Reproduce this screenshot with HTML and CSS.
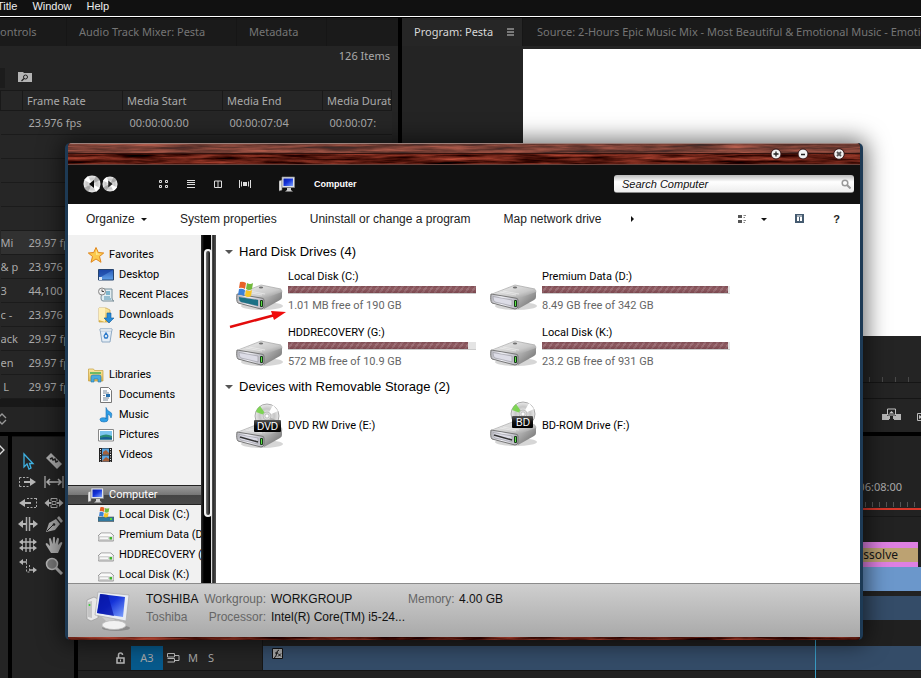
FILE: index.html
```html
<!DOCTYPE html>
<html lang="en">
<head>
<meta charset="utf-8">
<title>Computer</title>
<link rel="stylesheet" href="styles.css">
</head>
<body>
<svg class="defs" aria-hidden="true">
  <defs>
    <linearGradient id="steel" x1="0" y1="0" x2="1" y2="1"><stop offset="0" stop-color="#f4f4f4"/><stop offset=".6" stop-color="#c9c9c9"/><stop offset="1" stop-color="#7d7d7d"/></linearGradient>
    <linearGradient id="front" x1="0" y1="0" x2="1" y2="0"><stop offset="0" stop-color="#b5b5bb"/><stop offset=".4" stop-color="#f5f5fb"/><stop offset="1" stop-color="#aeaeb6"/></linearGradient>
    <linearGradient id="side" x1="0" y1="0" x2="1" y2="1"><stop offset="0" stop-color="#c8c8c8"/><stop offset="1" stop-color="#636363"/></linearGradient>
    <linearGradient id="blue" x1="0" y1="0" x2="1" y2="1"><stop offset="0" stop-color="#0a1fa8"/><stop offset=".45" stop-color="#1432d8"/><stop offset="1" stop-color="#7fa4ff"/></linearGradient>
    <linearGradient id="sky" x1="0" y1="0" x2="0" y2="1"><stop offset="0" stop-color="#2a5bb8"/><stop offset="1" stop-color="#5fa0e8"/></linearGradient>
    <linearGradient id="gold" x1="0" y1="0" x2="0" y2="1"><stop offset="0" stop-color="#fbe9a4"/><stop offset="1" stop-color="#e2b94f"/></linearGradient>
    <linearGradient id="label" x1="0" y1="0" x2="0" y2="1"><stop offset="0" stop-color="#555"/><stop offset=".5" stop-color="#111"/><stop offset="1" stop-color="#000"/></linearGradient>
    <radialGradient id="disc"><stop offset="0" stop-color="#fff"/><stop offset=".6" stop-color="#c6c6c6"/><stop offset="1" stop-color="#eaeaea"/></radialGradient>
    <filter id="grain" x="0" y="0" width="100%" height="100%" color-interpolation-filters="sRGB">
      <feTurbulence type="fractalNoise" baseFrequency="0.02 0.28" numOctaves="4" seed="8"/>
      <feColorMatrix values="1 0 0 0 -.13  .5 0 0 0 -.14  .4 0 0 0 -.13  0 0 0 0 1"/>
    </filter>
    <symbol id="i-drive" viewBox="0 0 48 28">
      <ellipse cx="26" cy="23" rx="21" ry="4" fill="#000" opacity=".16"/>
      <path d="M1 12 25 2 45 6 Q47 7 46 10L27 17 2 14z" fill="url(#steel)"/>
      <path d="M27 16 46 9V14Q46 16 44 17L28 26z" fill="url(#side)"/>
      <path d="M1 11Q0 18 2 20L25 26Q28 26 28 23V17Q28 15 25 15z" fill="url(#front)" stroke="#777"/>
      <path d="M3 13.5Q3 18 5 19L22 23V17z" fill="#dcdce6" stroke="#94949c" stroke-width=".6"/>
      <path d="M2 11 25 2 45 6" fill="none" stroke="#a5a5a5" stroke-width=".7"/>
      <path d="M10 9 26 12M13 8l16 3" stroke="#eee" stroke-width=".7"/>
      <rect x="24" y="17" width="3" height="7" rx="1" fill="#163d16"/><rect x="25" y="18" width="1" height="5" fill="#59e043"/>
      <ellipse cx="25" cy="4.500" rx="2.200" ry="1" fill="#707070"/>
    </symbol>
    <symbol id="i-flag" viewBox="0 0 16 16">
      <path d="M2 1Q5 0 8 2L7 8Q4 6 1 7z" fill="#e96227"/><path d="M9 2Q12 4 15 2L14 8Q11 10 8 8z" fill="#72b93d"/>
      <path d="M1 8Q4 7 7 9L6 15Q3 13 0 14z" fill="#3a81d8"/><path d="M8 9Q11 11 14 9L13 15Q10 17 7 15z" fill="#f7c527"/>
    </symbol>
    <symbol id="i-disc" viewBox="0 0 26 26">
      <circle cx="13" cy="13" r="12" fill="url(#disc)" stroke="#999" stroke-width=".8"/>
      <path d="M13 13 2 9A12 12 0 0 1 6 3z" fill="#6ed43e" opacity=".85"/><path d="M13 13 19 2 24 8z" fill="#fff"/><path d="M13 13 20 23 24 18z" fill="#9a9a9a" opacity=".6"/>
      <circle cx="13" cy="13" r="4" fill="#ddd" stroke="#aaa" stroke-width=".6"/><circle cx="13" cy="13" r="2" fill="#fff" stroke="#999" stroke-width=".5"/>
    </symbol>
    <symbol id="i-pc" viewBox="0 0 16 16">
      <path d="M0 5 3 4V14L0 15z" fill="#e9e9e9" stroke="#777" stroke-width=".6"/>
      <path d="M3 1H15.500V11.500H3z" fill="#dfe3ea" stroke="#858585" stroke-width=".7"/><path d="M4.500 2.500H14V10H4.500z" fill="url(#blue)"/>
      <path d="M8 12h4v2l2 1.500H6L8 14z" fill="#cfcfcf"/>
    </symbol>
    <symbol id="i-sdrive" viewBox="0 0 16 16"><path d="M3 6H13L16 9V13Q16 14 15 14H1Q0 14 0 13V9z" fill="#dedede" stroke="#858585" stroke-width=".8"/><path d="M3 6.500H13L15 9H1z" fill="#fafafa"/><rect x="1.500" y="10" width="9" height="2.500" fill="#f8f8f8" stroke="#aaa" stroke-width=".4"/><rect x="11.500" y="10" width="2.500" height="2.500" fill="#41b52e"/></symbol>
  </defs>
</svg>

<div class="editor">
  <nav class="menubar"><button>Title</button><button>Window</button><button>Help</button></nav>

  <div class="upper">
    <section class="project panel">
      <div class="tabs"><button class="tab tab-a">ontrols</button><button class="tab tab-b">Audio Track Mixer: Pesta</button><button class="tab tab-c">Metadata</button></div>
      <p class="count">126 Items</p>
      <div class="finder"><span class="stub"></span>
        <svg class="folder" viewBox="0 0 14 12"><path d="M0 1h5l1 1h8v9H0z" fill="#b4b4b4"/><circle cx="7.500" cy="6" r="2" fill="none" stroke="#222"/><path d="M6 7.500 3.500 10" stroke="#222" stroke-width="1.300"/></svg>
      </div>
      <table class="bin">
        <thead><tr><th></th><th>Frame Rate</th><th>Media Start</th><th>Media End</th><th>Media Durati</th></tr></thead>
        <tbody>
          <tr><td></td><td>23.976 fps</td><td>00:00:00:00</td><td>00:00:07:04</td><td>00:00:07:</td></tr>
          <tr><td></td><td></td><td></td><td></td><td></td></tr>
          <tr><td></td><td></td><td></td><td></td><td></td></tr>
          <tr><td></td><td></td><td></td><td></td><td></td></tr>
          <tr><td></td><td></td><td></td><td></td><td></td></tr>
          <tr class="picked"><td>Mi</td><td>29.97 fps</td><td></td><td></td><td></td></tr>
          <tr><td>&amp; p</td><td>23.976 fps</td><td></td><td></td><td></td></tr>
          <tr><td>3</td><td>44,100 Hz</td><td></td><td></td><td></td></tr>
          <tr><td>c -</td><td>23.976 fps</td><td></td><td></td><td></td></tr>
          <tr><td>ack</td><td>29.97 fps</td><td></td><td></td><td></td></tr>
          <tr><td>en</td><td>29.97 fps</td><td></td><td></td><td></td></tr>
          <tr><td>&nbsp;L</td><td>29.97 fps</td><td></td><td></td><td></td></tr>
        </tbody>
      </table>
      <div class="binfoot"><svg viewBox="0 0 8 12"><path d="M-2 5 2 1 6 5M-2 7 2 11 6 7" fill="none" stroke="#999" stroke-width="1.300"/></svg></div>
    </section>

    <section class="program panel">
      <div class="tabs"><button class="tab tab-on">Program: Pesta <svg viewBox="0 0 8 8"><path d="M0 1h7M0 4h7M0 7h7" stroke="#ccc"/></svg></button><button class="tab tab-src">Source: 2-Hours Epic Music Mix - Most Beautiful &amp; Emotional Music - Emotional</button></div>
      <div class="picture"></div>
      <div class="scrub"></div>
      <div class="transport">
        <svg class="lift" viewBox="0 0 20 13"><path d="M0 6h5v2h3v3h-1v1H0zM19 6h-5v2h-3v3h1v1h7z" fill="#b5b5b5"/><path d="M5.500 1h8v6h-8z" fill="#222" stroke="#c2c2c2"/><path d="M7 5.500h5L9.500 3z" fill="#ccc"/></svg>
        <svg class="export" viewBox="0 0 4 8"><path d="M5 .5H.5v7H5" fill="none" stroke="#bbb"/><path d="M2 2l4 2-4 2z" fill="#bbb"/></svg>
      </div>
    </section>
  </div>

  <div class="lower">
    <section class="edge panel"><svg viewBox="0 0 6 10"><path d="M-1 0 4 5-1 10" fill="none" stroke="#ddd" stroke-width="1.300"/></svg></section>
    <section class="tools panel">
      <button aria-label="Selection"><svg viewBox="0 0 20 18"><path d="M6 2V15L9 12 11 17 13 16 11.500 11.500H15z" fill="none" stroke="#3fb0e0" stroke-width="1.300"/></svg></button>
      <button aria-label="Razor"><svg viewBox="0 0 20 18"><path d="M2 6 7 1 18 12 13 17z" fill="#aaa"/><path d="M6 7l2-1 1 2 2-1 1 3 2-1" fill="none" stroke="#222" stroke-width="1.500"/></svg></button>
      <button aria-label="Track forward"><svg viewBox="0 0 20 18"><path d="M1.500 4.500H11M1.500 13.500H11M1.500 4.500v9" fill="none" stroke="#aaa" stroke-dasharray="2 1.500"/><path d="M6 8h6V5l6 4-6 4v-3H6z" fill="#b5b5b5"/></svg></button>
      <button aria-label="Rate stretch"><svg viewBox="0 0 20 18"><path d="M1 3v12M19 3v12" stroke="#aaa" stroke-width="1.300"/><path d="M3 9h14M6 6 3 9l3 3M14 6l3 3-3 3" fill="none" stroke="#b5b5b5" stroke-width="1.500"/></svg></button>
      <button aria-label="Track backward"><svg viewBox="0 0 20 18"><path d="M9 4.500h9M9 13.500h9M18.500 4v10" fill="none" stroke="#aaa" stroke-dasharray="2 1.500"/><path d="M13 8H7V5L1 9l6 4v-3h6z" fill="#b5b5b5"/></svg></button>
      <button aria-label="Slip"><svg viewBox="0 0 20 18"><path d="M7 7V4.500h6V7M7 11v2.500h6V11M8 7.500h4v3H8z" fill="none" stroke="#aaa"/><path d="M.5 9 5 5v3h2v2H5v3zM19.500 9 15 5v3h-2v2h2v3z" fill="#b5b5b5"/></svg></button>
      <button aria-label="Ripple"><svg viewBox="0 0 20 18"><path d="M8.500 2v14M11.500 2v14" stroke="#aaa" stroke-width="1.500"/><path d="M0 9 5 5v3h3v2H5v3zM20 9l-5-4v3h-3v2h3v3z" fill="#b5b5b5"/></svg></button>
      <button aria-label="Pen"><svg viewBox="0 0 20 18"><path d="M2 17 5 8 12 4 16 9 11 15z" fill="#aaa"/><path d="M13 3 15 1 19 6 17 8z" fill="#aaa"/><path d="M3 16l6-6" stroke="#222"/><circle cx="10" cy="9.500" r="1.300" fill="#222"/></svg></button>
      <button aria-label="Rolling"><svg viewBox="0 0 20 18"><path d="M8 2v14M12 2v14M4 6h12M4 12h12" stroke="#b5b5b5" stroke-width="1.300"/><path d="M5 3 1 6l4 3zM15 3l4 3-4 3zM5 9l-4 3 4 3zM15 9l4 3-4 3z" fill="#b5b5b5"/></svg></button>
      <button aria-label="Hand"><svg viewBox="0 0 20 18"><path d="M7 17 2 9Q1 7 3 7L6 10 5 3Q6 1 7 3L8.500 8 9 1.500Q10 0 11 1.500V8L13 2.500Q14 1 15 3L14 9 17 6Q19 6 18 8L14 17z" fill="#b0b0b0"/></svg></button>
      <button aria-label="Roll edit"><svg viewBox="0 0 20 18"><path d="M3 5h6M11 13h6" stroke="#b5b5b5" stroke-width="1.500"/><path d="M5 2 1 5l4 3zM15 10l4 3-4 3z" fill="#b5b5b5"/><path d="M8.500 2v13h3V8" fill="none" stroke="#aaa" stroke-dasharray="2 1.500"/></svg></button>
      <button aria-label="Zoom"><svg viewBox="0 0 20 18"><circle cx="8" cy="7" r="5.500" fill="#777" stroke="#b5b5b5" stroke-width="1.500"/><path d="M12 11l6 6" stroke="#b5b5b5" stroke-width="3"/></svg></button>
    </section>
    <section class="timeline panel">
      <div class="ruler"><span>00:06:08:00</span><i class="ticks"></i><i class="render"></i></div>
      <div class="video"><div class="fade">Cross Dissolve</div><div class="clip"></div></div>
      <div class="track"><div class="head"></div><div class="lane clip-a"></div></div>
      <div class="track blank"><div class="head"></div><div class="lane"></div></div>
      <div class="track"><div class="head">
          <svg viewBox="0 0 10 12"><path d="M1 6h7v5H1zM2.500 6V3Q2.500 1 4.500 1T6.500 3" fill="none" stroke="#bbb" stroke-width="1.500"/><path d="M4.500 7.500v2" stroke="#bbb"/></svg>
          <button class="target">A3</button>
          <svg class="sync" viewBox="0 0 13 10"><path d="M.5.500h7v3.500h-7zM.5 5.500h7V9h-7M8 2.500h4v5H8" fill="none" stroke="#bbb"/></svg>
          <button>M</button><button>S</button>
        </div><div class="lane clip-a"><svg class="fx" viewBox="0 0 12 12"><path d="M.5.500h10v10H.5z" fill="#aaa" stroke="#111"/><path d="M2 9.500Q4 10 4.500 6T7 2M3 5h3M6 5.500l3 3M9 5.500l-3 3" fill="none" stroke="#111"/></svg></div></div>
      <div class="floor"></div>
      <i class="playhead"></i>
    </section>
  </div>
</div>

<main class="explorer">
  <header class="wood">
    <svg class="woodgrain"><rect width="100%" height="100%" filter="url(#grain)"/></svg>
    <div class="caps">
      <button aria-label="Maximize"><svg viewBox="0 0 12 12"><circle cx="6" cy="6" r="5" fill="#f2f2f2" stroke="#311"/><path d="M3.500 6h5M6 3.500v5" stroke="#222" stroke-width="1.300"/></svg></button>
      <button aria-label="Minimize"><svg viewBox="0 0 12 12"><circle cx="6" cy="6" r="5" fill="#f2f2f2" stroke="#311"/><path d="M4 6.500h4" stroke="#222" stroke-width="1.300"/></svg></button>
      <button class="shut" aria-label="Close"><svg viewBox="0 0 12 12"><circle cx="6" cy="6" r="5.300" fill="#eee" stroke="#311"/><path d="M4 4l4 4M8 4 4 8" stroke="#555" stroke-width="1.800"/></svg></button>
    </div>
  </header>
  <div class="navbar">
    <button class="back" aria-label="Back"><svg viewBox="0 0 18 18"><circle cx="9" cy="9" r="8.500" fill="url(#disc)"/><path d="M9 9 1 5 5 1zM9 9l8 4-4 4z" fill="#fff"/><path d="M9 9 13 1l4 4zM9 9 1 13l4 4z" fill="#8c8c8c" opacity=".6"/><path d="M11 5v8L6 9z" fill="#080808"/></svg></button>
    <button class="forth" aria-label="Forward"><svg viewBox="0 0 18 18"><circle cx="9" cy="9" r="8.500" fill="url(#disc)"/><path d="M9 9 1 5 5 1zM9 9l8 4-4 4z" fill="#fff"/><path d="M9 9 13 1l4 4zM9 9 1 13l4 4z" fill="#8c8c8c" opacity=".6"/><path d="M7 5v8l5-4z" fill="#222"/></svg></button>
    <div class="views">
      <button aria-label="Icons"><svg viewBox="0 0 12 10"><path d="M1.500 1.500h2v2h-2zM7.500 1.500h2v2h-2zM1.500 6.500h2v2h-2zM7.500 6.500h2v2h-2z" fill="none" stroke="#ddd"/></svg></button>
      <button aria-label="List"><svg viewBox="0 0 12 10"><path d="M2 1.500h8M2 3.500h8M2 5.500h8M2 8.500h8" stroke="#ddd"/></svg></button>
      <button aria-label="Columns"><svg viewBox="0 0 12 10"><path d="M2.500 2h7v6.500h-7zM6 2v6.500" fill="none" stroke="#ddd"/></svg></button>
      <button aria-label="Flow"><svg viewBox="0 0 12 10"><path d="M.5 1v8M11.500 1v8M2.500 2.500v5M9.500 2.500v5" stroke="#ddd"/><path d="M4 3h4v4H4z" fill="#ddd"/></svg></button>
    </div>
    <svg class="pc"><use href="#i-pc"/></svg>
    <h1>Computer</h1>
    <label class="search"><input type="text" aria-label="Search" placeholder="Search Computer"><svg viewBox="0 0 10 10"><circle cx="4" cy="4" r="2.800" fill="none" stroke="#999" stroke-width="1.500"/><path d="M6 6l3.500 3.500" stroke="#999" stroke-width="2"/></svg></label>
  </div>
  <div class="toolbar">
    <button>Organize <i class="down"></i></button><button>System properties</button><button>Uninstall or change a program</button><button>Map network drive</button><button aria-label="More"><i class="right"></i></button>
    <div class="toolend">
      <button aria-label="Change view"><svg viewBox="0 0 10 10"><path d="M0 1h4v3H0zM0 6h4v3H0z" fill="#555"/><path d="M5.500 1.500H8M5.500 3.500H7M5.500 6.500H8M5.500 8.500H7" stroke="#888"/></svg></button>
      <button aria-label="View menu"><i class="down"></i></button>
      <button aria-label="Preview pane"><svg viewBox="0 0 10 10"><path d="M0 0h9v9H0z" fill="#455b70"/><path d="M2 3h2v4H2zM5 3h2v4H5zM2 1.500h5v1H2z" fill="#fff"/></svg></button>
      <button class="help">?</button>
    </div>
  </div>
  <div class="body">
    <nav class="tree">
      <ul>
        <li class="top"><svg viewBox="0 0 16 16"><path d="M8 .5 10.300 5.500 15.700 6 11.500 9.500 13 15.300 8 12 3 15.300 4.500 9.500.3 6 5.700 5.500z" fill="#fbc94c" stroke="#e0861c"/><path d="M8 2 9.500 6.500 14 7 8 8z" fill="#fff3a8" opacity=".7"/></svg><a href="#">Favorites</a></li>
        <li><svg viewBox="0 0 16 16"><path d="M.5 2.500h15v10.500H.5z" fill="url(#sky)" stroke="#27456f"/><path d="M1 3h14L1 11z" fill="#123b9c" opacity=".6"/><path d="M1 10h3v3H1z" fill="#dbe8f5"/></svg><a href="#">Desktop</a></li>
        <li><svg viewBox="0 0 16 16"><path d="M4 2h10v9q0 3 2 3H5q-2 0-2-3z" fill="#e1edf2" stroke="#788e99"/><path d="M8 4h4v4H8z" fill="#7fb5cc"/><path d="M6 10h6M6 12h7" stroke="#4d8fae"/><circle cx="4" cy="4.500" r="3.500" fill="#eee" stroke="#888"/><path d="M4 2.500v2h2" fill="none" stroke="#444"/></svg><a href="#">Recent Places</a></li>
        <li><svg viewBox="0 0 16 16"><path d="M1 1h7l4 2v12H1z" fill="url(#gold)" stroke="#c8a040" stroke-width=".7"/><path d="M7 1v14L1 13V1z" fill="#fff0b8"/><path d="M9 6h4v5h3l-5 5-5-5h3z" fill="#278bd8" stroke="#155e9e" stroke-width=".6"/></svg><a href="#">Downloads</a></li>
        <li><svg viewBox="0 0 16 16"><path d="M2 2h12l-2 13H4z" fill="#e4edf6" stroke="#8faac5"/><path d="M2 2h12l-.3 2H2.300z" fill="#fff" stroke="#8faac5" stroke-width=".6"/><path d="M6 9l2-3 2 3M10 9l-1 2H7L6 9" fill="none" stroke="#2a78c9" stroke-width="1.300"/></svg><a href="#">Recycle Bin</a></li>
        <li class="top gap"><svg viewBox="0 0 16 16"><path d="M.5 2h5l1 1.500H15V14H.5z" fill="url(#gold)" stroke="#c49c3c" stroke-width=".7"/><path d="M2 5h11v2H2z" fill="#6fba63"/><path d="M3 15V10q0-2 2-2h6q2 0 2 2v5h-3v-3H6v3z" fill="#4aaade" stroke="#2175a8" stroke-width=".6"/></svg><a href="#">Libraries</a></li>
        <li><svg viewBox="0 0 16 16"><path d="M2.500.5h8l3 3v12h-11z" fill="#fdfdfd" stroke="#777"/><path d="M5 4h4M5 6h6M5 8.500h2M5 11h6M5 13h5" stroke="#789"/><path d="M8 7h4v3H8z" fill="#266fae"/></svg><a href="#">Documents</a></li>
        <li><svg viewBox="0 0 16 16"><path d="M8 12V.5Q9 4 12 5t1 6q-.5-3-3-4v5.500Q10 15 6 15T2 12.500 8 11z" fill="#2f9fe6" stroke="#1a71b5" stroke-width=".6"/></svg><a href="#">Music</a></li>
        <li><svg viewBox="0 0 16 16"><path d="M.5 2.500h15v11.500H.5z" fill="#fff" stroke="#888"/><path d="M2 4h12v8.500H2z" fill="#7cc5ef"/><path d="M2 9q6-3 12 0v3.500H2z" fill="#2b8c76"/><path d="M2 11q6-2 12 0v1.500H2z" fill="#175e94"/></svg><a href="#">Pictures</a></li>
        <li><svg viewBox="0 0 16 16"><path d="M1 1h13v14H1z" fill="#222"/><path d="M4 1.500h7v6H4zM4 8.500h7v6H4z" fill="#5aa3dd"/><path d="M5 5l3-2 3 3v1.500H5zM4 14l4-4 3 2v2.500H4z" fill="#a4613c"/><path d="M2.500 2v13M12.500 2v13" stroke="#eee" stroke-dasharray="1 1.500"/></svg><a href="#">Videos</a></li>
        <li class="top gap chosen"><svg><use href="#i-pc"/></svg><a href="#">Computer</a></li>
        <li><svg viewBox="0 0 16 16"><path d="M0 10h16v4.500H0z" fill="#31789f" stroke="#555" stroke-width=".6"/><path d="M12 11h2v2h-2z" fill="#58d83b"/><use href="#i-flag" x="1" y="-1" width="11" height="12"/></svg><a href="#">Local Disk (C:)</a></li>
        <li><svg><use href="#i-sdrive"/></svg><a href="#">Premium Data (D:)</a></li>
        <li><svg><use href="#i-sdrive"/></svg><a href="#">HDDRECOVERY (G:)</a></li>
        <li><svg><use href="#i-sdrive"/></svg><a href="#">Local Disk (K:)</a></li>
      </ul>
    </nav>
    <div class="scroll"><div class="thumb"></div></div>
    <section class="files">
      <h2><i></i>Hard Disk Drives (4)</h2>
      <div class="grid">
        <article><svg class="pic" viewBox="0 0 48 48"><use href="#i-drive" y="14" width="48" height="28"/><path d="M3 28Q3 32 5 33L22 37V31z" fill="#1c7186"/><use href="#i-flag" x="2" y="12" width="16" height="16"/></svg>
          <div><h3>Local Disk (C:)</h3><div class="meter"><i style="width:100%"></i></div><p>1.01 MB free of 190 GB</p></div></article>
        <article><svg class="pic" viewBox="0 0 48 48"><use href="#i-drive" y="14" width="48" height="28"/></svg>
          <div><h3>Premium Data (D:)</h3><div class="meter"><i style="width:99%"></i></div><p>8.49 GB free of 342 GB</p></div></article>
        <article><svg class="pic" viewBox="0 0 48 48"><use href="#i-drive" y="14" width="48" height="28"/></svg>
          <div><h3>HDDRECOVERY (G:)</h3><div class="meter"><i style="width:96%"></i></div><p>572 MB free of 10.9 GB</p></div></article>
        <article><svg class="pic" viewBox="0 0 48 48"><use href="#i-drive" y="14" width="48" height="28"/></svg>
          <div><h3>Local Disk (K:)</h3><div class="meter"><i style="width:99%"></i></div><p>23.2 GB free of 931 GB</p></div></article>
      </div>
      <h2><i></i>Devices with Removable Storage (2)</h2>
      <div class="grid discs">
        <article><svg class="pic" viewBox="0 0 48 48"><use href="#i-drive" y="20" width="48" height="28"/><path d="M4 36l18 5" stroke="#333" stroke-width="1.500"/><use href="#i-disc" x="18" y="2" width="26" height="26"/><rect x="18" y="19" width="27" height="12" rx="1" fill="url(#label)"/><text class="badge" x="31.500" y="29">DVD</text></svg><div><h3>DVD RW Drive (E:)</h3></div></article>
        <article><svg class="pic" viewBox="0 0 48 48"><use href="#i-drive" y="18" width="48" height="28"/><path d="M4 34l18 5" stroke="#333" stroke-width="1.500"/><use href="#i-disc" x="20" y="0" width="26" height="26"/><rect x="22" y="15" width="21" height="12" rx="1" fill="url(#label)"/><text class="badge" x="33" y="25">BD</text></svg><div><h3>BD-ROM Drive (F:)</h3></div></article>
      </div>
      <svg class="arrow" viewBox="0 0 58 18"><path d="M1 16 46 4" stroke="#e30b0b" stroke-width="2.500"/><path d="M42 0 57 1 45 9z" fill="#f00c0c"/></svg>
    </section>
  </div>
  <footer class="details">
    <svg class="bigpc" viewBox="0 0 46 42"><ellipse cx="30" cy="38" rx="14" ry="3" fill="#000" opacity=".2"/><path d="M1 10 8 7 12 9V28L5 31 1 29z" fill="#e8e8e8" stroke="#999" stroke-width=".7"/><path d="M2 12l4-1v17l-4-1z" fill="#c4c4c4"/><circle cx="3.500" cy="15" r="1" fill="#3c3"/><path d="M16 27 26 25 30 32H21z" fill="#ccc"/><ellipse cx="28" cy="35" rx="12" ry="4.500" fill="#f1f1f1" stroke="#b4b4b4" stroke-width=".7"/><path d="M12 2 43 5 40 31 9 25z" fill="#e9edf3" stroke="#aaa" stroke-width=".7"/><path d="M14 4 39 7 37 27 11 23z" fill="url(#blue)"/><path d="M15 4 22 5 28 26 11 23z" fill="#0714a5" opacity=".7"/></svg>
    <dl class="who"><dd>TOSHIBA</dd><dt>Toshiba</dt></dl>
    <dl class="facts"><dt>Workgroup:</dt><dd>WORKGROUP</dd><dt>Processor:</dt><dd>Intel(R) Core(TM) i5-24...</dd></dl>
    <dl class="facts"><dt>Memory:</dt><dd>4.00 GB</dd></dl>
  </footer>
  <div class="sill"><svg class="woodgrain"><rect width="100%" height="100%" filter="url(#grain)"/></svg></div>
</main>
</body>
</html>
```
FILE: styles.css
```css
* { box-sizing: border-box; }
body { margin: 0; background: #000; color: #aaa; font: 11px/16px "Noto Sans", sans-serif; overflow: hidden; }
button { padding: 0; border: 0; background: none; color: inherit; font: inherit; white-space: nowrap; }
svg { display: block; flex: none; }
h1, h2, h3, p, ul, dl, dd { margin: 0; padding: 0; font-weight: 400; }
.defs { position: absolute; width: 0; height: 0; }

/* Video editor */
.editor { display: flex; flex-direction: column; height: 100vh; }
.menubar { display: flex; gap: 15px; height: 18px; flex: none; padding-bottom: 4px; margin-left: -3px; background: #111; border-bottom: 1px solid #000; box-shadow: inset 0 -1px #fff; color: #eee; font: 11px/13px "Liberation Sans", sans-serif; }
.upper { flex: 414 0 0; display: flex; gap: 4px; min-height: 0; }
.lower { flex: 242 0 0; display: flex; gap: 4px; min-height: 0; padding-top: 4px; }
.panel { background: #242424; overflow: hidden; }
.project { flex: 0 0 398px; display: flex; flex-direction: column; }
.tabs { display: flex; height: 28px; flex: none; background: #1a1a1a; color: #757575; }
.tab { text-align: left; border-right: 1px solid #161616; }
.tab-a { width: 67px; }
.tab-b { width: 170px; padding-left: 12px; }
.tab-c { width: 90px; padding-left: 12px; }
.count { padding: 2px 8px 0 0; text-align: right; }
.finder { display: flex; gap: 13px; height: 26px; padding-top: 4px; }
.stub { width: 5px; height: 20px; background: #1c1c1c; }
.folder { width: 14px; height: 12px; margin-top: 3px; }
.bin { width: 392px; table-layout: fixed; border-collapse: collapse; background: #262626; }
.bin th, .bin td { height: 24px; padding: 0 0 0 6px; border-bottom: 1px solid #1b1b1b; text-align: left; font-weight: 400; white-space: nowrap; overflow: hidden; }
.bin th { height: 20px; padding-left: 4px; border: 1px solid #191919; }
.bin td:nth-child(n+3) { padding-left: 7px; }
.bin th:first-child, .bin td:first-child { width: 22px; padding-left: 0; }
.bin th:nth-child(-n+4):not(:first-child) { width: 100px; }
.picked { background: #313131; }
.binfoot { flex: 1; border-top: 8px solid #181818; padding-top: 6px; }
.binfoot svg { width: 8px; height: 12px; }
.program { flex: 1; display: flex; flex-direction: column; min-width: 0; }
.tab-on { flex: 0 0 121px; display: flex; align-items: center; gap: 14px; padding-left: 12px; background: #262626; color: #d8d8d8; }
.tab-on svg { width: 8px; height: 8px; }
.tab-src { padding-left: 14px; }
.picture { flex: 0 0 287px; margin: 3px 0 0 121px; background: #fff; }
.scrub { flex: 0 0 47px; border-bottom: 1px solid #151515; background: repeating-linear-gradient(90deg, transparent 0 12px, #484848 12px 13px) 0 41px / 100% 5px no-repeat; }
.transport { flex: 1; display: flex; align-items: center; justify-content: flex-end; gap: 15px; margin-top: 15px; padding-bottom: 2px; border-top: 1px solid #151515; }
.lift { width: 20px; height: 13px; }
.export { width: 4px; height: 8px; margin-top: 4px; }
.edge { flex: 0 0 8px; }
.edge svg { width: 6px; height: 10px; margin-top: 9px; }
.tools { flex: 0 0 62px; display: grid; grid-template-columns: 20px 20px; grid-auto-rows: 18px; gap: 3px 6px; padding: 15px 0 0 6px; border-top: 1px solid #161616; }
.tools svg { width: 20px; height: 18px; }
.timeline { flex: 1; min-width: 0; position: relative; background: #222; }
.ruler { display: grid; grid-template-rows: 43px 16px 13px 2px 7px; justify-items: end; height: 81px; border-bottom: 1px solid #181818; }
.ruler span { grid-row: 2; margin-right: 19px; }
.ticks { grid-row: 3; width: 100%; background: repeating-linear-gradient(270deg, transparent 0 6px, #555 6px 7px) 0 7px / 100% 5px no-repeat; }
.render { grid-row: 4; width: 100%; background: #d8382b; }
.video { margin: 25px 0 5px 184px; }
.fade { width: calc(100% - 3px); height: 25px; border: solid #de80e2; border-width: 6px 0 5px; background: #bca272; color: #151515; font-size: 12px; text-align: right; padding-right: 20px; line-height: 14px; }
.clip { height: 24px; background: #6b97cb; }
.track { display: flex; height: 24px; }
.blank { height: 26px; background: #202020; }
.head { flex: 0 0 185px; display: flex; align-items: center; padding-left: 38px; border-right: 1px solid #161616; background: #242424; }
.head svg { width: 10px; height: 12px; }
.head .target { width: 32px; height: 24px; margin-left: 5px; background: #075a8c; }
.head .sync { width: 13px; height: 10px; margin: 0 8px 0 4px; }
.head button + button { margin-left: 10px; }
.lane { flex: 1; }
.clip-a { background: #344c68; }
.fx { width: 12px; height: 12px; margin: 2px 0 0 9px; }
.floor { height: 10px; border-top: 1px solid #161616; }
.playhead { position: absolute; top: 0; bottom: 0; left: 737px; width: 1px; background: #399cc4; }

/* File browser window */
.explorer { position: absolute; top: 143px; right: 58px; bottom: 38px; left: 65px; display: flex; flex-direction: column; border: solid #1d3a55; border-width: 0 3px; border-radius: 5px; background: #111; box-shadow: 0 0 22px 4px rgba(0, 0, 0, .55); font: 11px/14px "Liberation Sans", sans-serif; color: #000; }
.wood { position: relative; flex: 0 0 22px; border-radius: 4px 4px 0 0; border-bottom: 1px solid #67423c; overflow: hidden; background: #421109; }
.woodgrain { position: absolute; inset: 0; width: 100%; height: 100%; }
.wood::after { content: ""; position: absolute; inset: 0 0 auto; height: 9px; background: rgba(200, 170, 160, .26); border-top: 1px solid #9b817c; border-bottom: 1px solid #33130f; }
.caps { position: absolute; z-index: 1; top: 5px; right: 15px; display: flex; gap: 15px; }
.caps svg { width: 12px; height: 12px; }
.caps .shut { margin-left: 9px; }
.navbar { flex: 0 0 39px; display: flex; align-items: center; padding: 0 6px 1px 15px; background: #111; }
.back svg { width: 18px; height: 18px; }
.forth svg { width: 16px; height: 16px; margin-left: 1px; }
.views { display: flex; gap: 15px; margin: 0 28px 0 40px; }
.views svg { width: 12px; height: 10px; }
.pc { width: 16px; height: 16px; }
.navbar h1 { margin-left: 19px; color: #fff; font-size: 9px; font-weight: 700; }
.search { display: flex; align-items: center; width: 240px; height: 18px; margin-left: auto; padding-right: 3px; border-radius: 3px; border-bottom: 1px solid #888; background: linear-gradient(#bbb, #fff 40%, #ededed); }
.search input { flex: 1; min-width: 0; padding: 1px 0 0 8px; border: 0; outline: 0; background: none; color: #111; font: italic 11px/16px "Liberation Sans", sans-serif; }
.search input::placeholder { color: #111; opacity: 1; }
.search svg { width: 10px; height: 10px; }
.toolbar { flex: 0 0 31px; display: flex; align-items: center; gap: 33px; padding: 0 20px 2px 18px; background: #fff; color: #222; font: 12px/16px "Liberation Sans", sans-serif; }
.down, .right { display: inline-block; vertical-align: middle; margin-left: 3px; border: 3px solid transparent; border-top-color: #111; border-bottom: 0; }
.right { margin: 0 0 0 -5px; border: 3px solid transparent; border-left-color: #111; border-right: 0; }
.toolend { display: flex; align-items: center; gap: 28px; margin-left: auto; }
.toolend svg { width: 10px; height: 10px; }
.toolend button:nth-child(2) { margin-left: -18px; }
.help { font-weight: 700; font-size: 11px; }
.body { flex: 1; display: flex; min-height: 0; background: #fff; }
.tree { flex: 0 0 133px; overflow: hidden; background: #f1f1f1; }
.tree ul { padding-top: 10px; list-style: none; }
.tree li { display: flex; align-items: center; gap: 5px; height: 20px; padding-left: 30px; font-family: Roboto, sans-serif; }
.tree li.top { padding-left: 20px; }
.tree li.gap { margin-top: 20px; }
.tree svg { width: 16px; height: 16px; }
.tree a { color: #000; text-decoration: none; white-space: nowrap; }
.tree .chosen { border: solid #222; border-width: 1px 0; background: linear-gradient(#9a9a9a, #777 48%, #444 50%, #4a4a4a); }
.tree .chosen a { color: #fff; }
.scroll { flex: 0 0 15px; padding: 14px 4px 66px 3px; background: linear-gradient(90deg, #333, #000 20%, #000 65%, #ddd 67% 72%, #222 78%, #555); }
.thumb { height: 100%; border: 2px solid #f2f2f2; border-radius: 4px; background: linear-gradient(90deg, #777, #111); }
.files { position: relative; flex: 1; padding: 8px 8px 0 9px; }
.files h2 { display: flex; align-items: center; gap: 6px; height: 18px; font: 13px/18px "Liberation Sans", sans-serif; }
.files h2 i { border: 4px solid transparent; border-top-color: #555; border-bottom: 0; }
.grid { display: grid; grid-template-columns: repeat(2, 254px); grid-auto-rows: 48px; row-gap: 8px; padding: 8px 0 0 11px; margin-bottom: 5px; }
.grid article { display: flex; gap: 4px; }
.pic { width: 48px; height: 48px; }
.grid article > div { width: 188px; }
.grid h3, .grid p { font: 11px/15px Roboto, sans-serif; white-space: nowrap; }
.grid p { margin-top: 4px; color: #666; }
.meter { height: 8px; margin-top: 2px; border-bottom: 1px solid #ccc; background: #e4e4e4; }
.meter i { display: block; height: 7px; background: linear-gradient(rgba(80, 30, 40, .25), transparent 40%, rgba(70, 20, 30, .3)), repeating-linear-gradient(125deg, #8f5c62 0 3px, #a0747a 3px 5px); }
.discs { padding-top: 5px; }
.discs article { align-items: center; }
.badge { fill: #fff; font: 10px "Liberation Sans", sans-serif; text-anchor: middle; }
.arrow { position: absolute; left: 13px; top: 76px; width: 58px; height: 18px; }
.details { flex: 0 0 54px; display: flex; padding: 6px 0 0 18px; border-top: 1px solid #8b8b8b; background: linear-gradient(#cfcfcf, #a9a9a9); font: 12px/18px "Liberation Sans", sans-serif; }
.bigpc { width: 46px; height: 42px; }
.details dt { color: #666; }
.details dd { color: #111; }
.who { width: 57px; margin-left: 14px; }
.facts { display: grid; grid-template-columns: 63px auto; grid-auto-rows: 18px; column-gap: 5px; text-align: left; white-space: nowrap; }
.facts dt { text-align: right; }
.facts + .facts { grid-template-columns: 46px auto; margin-left: 3px; }
.sill { position: relative; flex: 0 0 3px; overflow: hidden; border-radius: 0 0 4px 4px; }
```
